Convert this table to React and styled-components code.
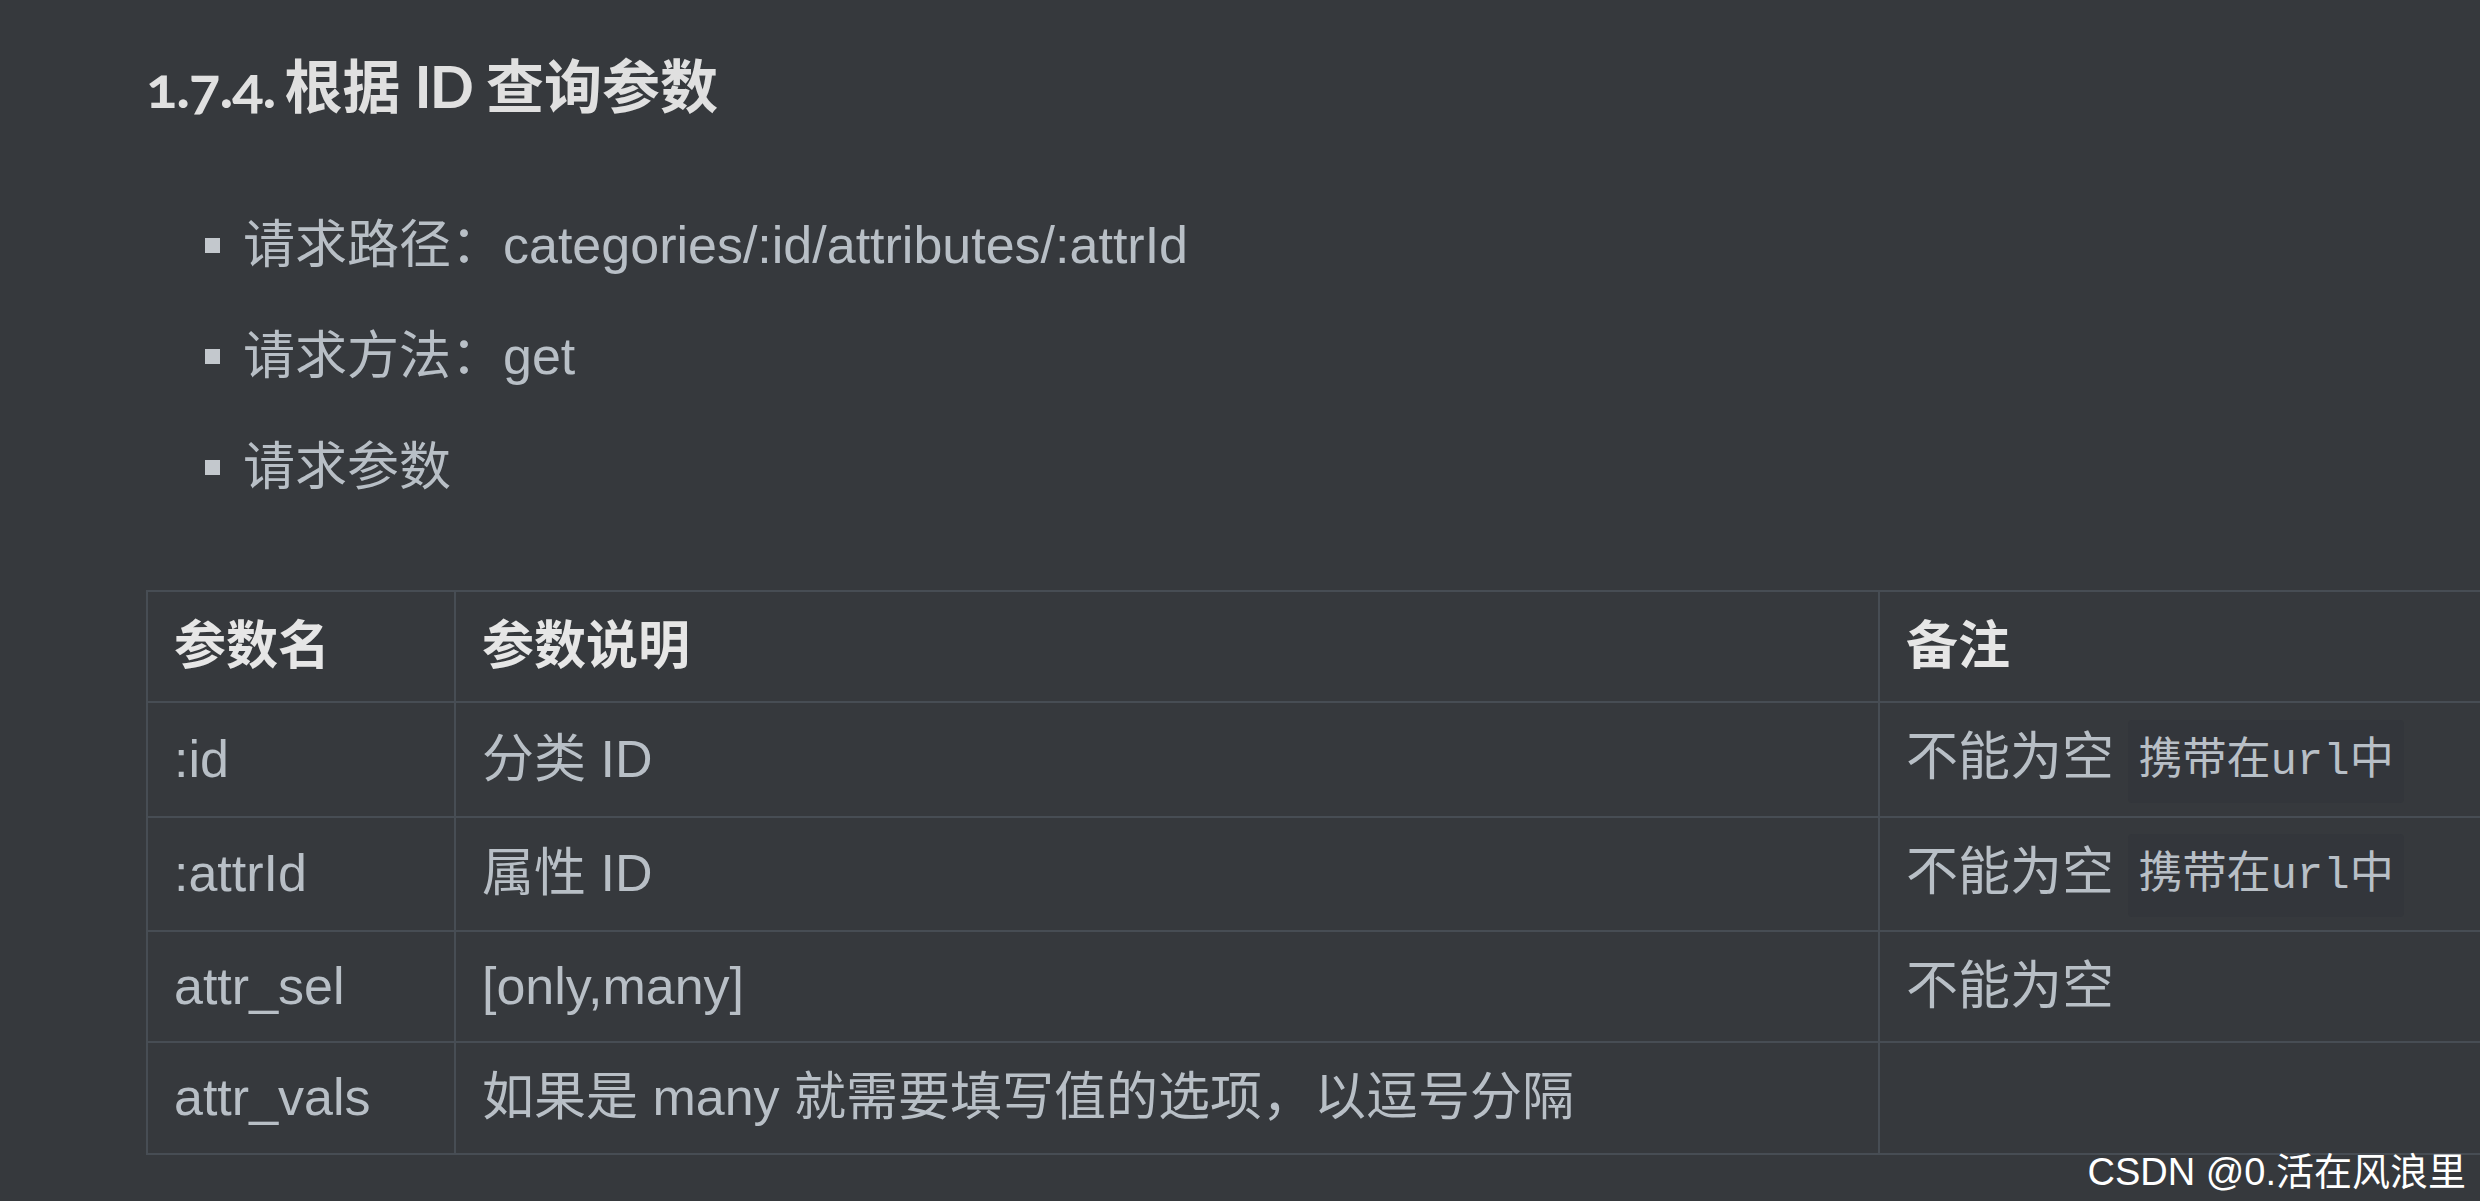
import styled, { createGlobalStyle } from "styled-components";

const GlobalStyle = createGlobalStyle`
  html, body {
    margin: 0;
    padding: 0;
    background: #36393d;
    overflow: hidden;
  }
`;

const Page = styled.div`
  position: relative;
  box-sizing: border-box;
  width: 2480px;
  height: 1201px;
  padding: 51px 0 0 146px;
  color: #b8bfc6;
  font-family: "Liberation Sans", Arial, "Noto Sans CJK SC", sans-serif;
  font-size: 52px;
  line-height: 1.6;
`;

const Heading = styled.h3`
  margin: 0;
  font-family: Lato, "Noto Sans CJK SC", sans-serif;
  font-size: 58px;
  font-weight: 700;
  line-height: 70px;
  color: #e0e0e0;
  font-variant-numeric: oldstyle-nums;
  white-space: nowrap;
`;

const Num = styled.span`
  margin-right: -5px;
  letter-spacing: -1px;
`;

const Latin = styled.span`
  letter-spacing: -2px;
`;

const List = styled.ul`
  list-style: none;
  margin: 83px 0 0;
  padding: 0 0 0 59px;
  li + li {
    margin-top: 28px;
  }
`;

const Item = styled.li`
  display: flex;
  align-items: center;
  &::before {
    content: "";
    display: block;
    width: 15px;
    height: 15px;
    margin-right: 23px;
    background: #c3c8cd;
    flex-shrink: 0;
  }
`;

const Table = styled.table`
  margin-top: 80px;
  border-collapse: collapse;
  table-layout: fixed;
  width: 2440px;
  td, th {
    border: 2px solid #474d54;
    padding: 13px 26px;
    text-align: left;
    vertical-align: middle;
    white-space: nowrap;
  }
  th {
    font-weight: 700;
    color: #e6e6e6;
  }
`;

const Code = styled.code`
  display: inline-block;
  vertical-align: middle;
  font-family: "Liberation Mono", "Noto Sans CJK SC", monospace;
  font-size: 44px;
  line-height: 70px;
  padding: 7px 10px 6px;
  background: #33363b;
  border-radius: 4px;
  color: #b8bfc6;
`;

const Watermark = styled.div`
  position: absolute;
  right: 14px;
  bottom: 6px;
  font-family: "Liberation Sans", "Noto Sans CJK SC", sans-serif;
  font-size: 38px;
  line-height: 46px;
  color: #ffffff;
  white-space: nowrap;
`;

const Faint = styled.span`
  position: absolute;
  right: 2px;
  bottom: 2px;
  font-size: 17px;
  line-height: 20px;
  color: rgba(255, 255, 255, 0.12);
  z-index: -1;
`;

const rows = [
  { name: ":id", desc: "分类 ID", note: "不能为空", code: "携带在url中" },
  { name: ":attrId", desc: "属性 ID", note: "不能为空", code: "携带在url中" },
  { name: "attr_sel", desc: "[only,many]", note: "不能为空" },
  { name: "attr_vals", desc: "如果是 many 就需要填写值的选项，以逗号分隔", note: "" },
];

export default function App() {
  return (
    <>
      <GlobalStyle />
      <Page>
        <Heading>
          <Num>1.7.4.</Num> 根据 <Latin>ID</Latin> 查询参数
        </Heading>
        <List>
          <Item>请求路径：categories/:id/attributes/:attrId</Item>
          <Item>请求方法：get</Item>
          <Item>请求参数</Item>
        </List>
        <Table>
          <colgroup>
            <col style={{ width: 308 }} />
            <col style={{ width: 1424 }} />
            <col />
          </colgroup>
          <thead>
            <tr>
              <th>参数名</th>
              <th>参数说明</th>
              <th>备注</th>
            </tr>
          </thead>
          <tbody>
            {rows.map((r) => (
              <tr key={r.name}>
                <td>{r.name}</td>
                <td>{r.desc}</td>
                <td>
                  {r.note}
                  {r.code && <> <Code>{r.code}</Code></>}
                </td>
              </tr>
            ))}
          </tbody>
        </Table>
        <Watermark>
          CSDN @0.活在风浪里
          <Faint>@稀土掘金技术社区</Faint>
        </Watermark>
      </Page>
    </>
  );
}
